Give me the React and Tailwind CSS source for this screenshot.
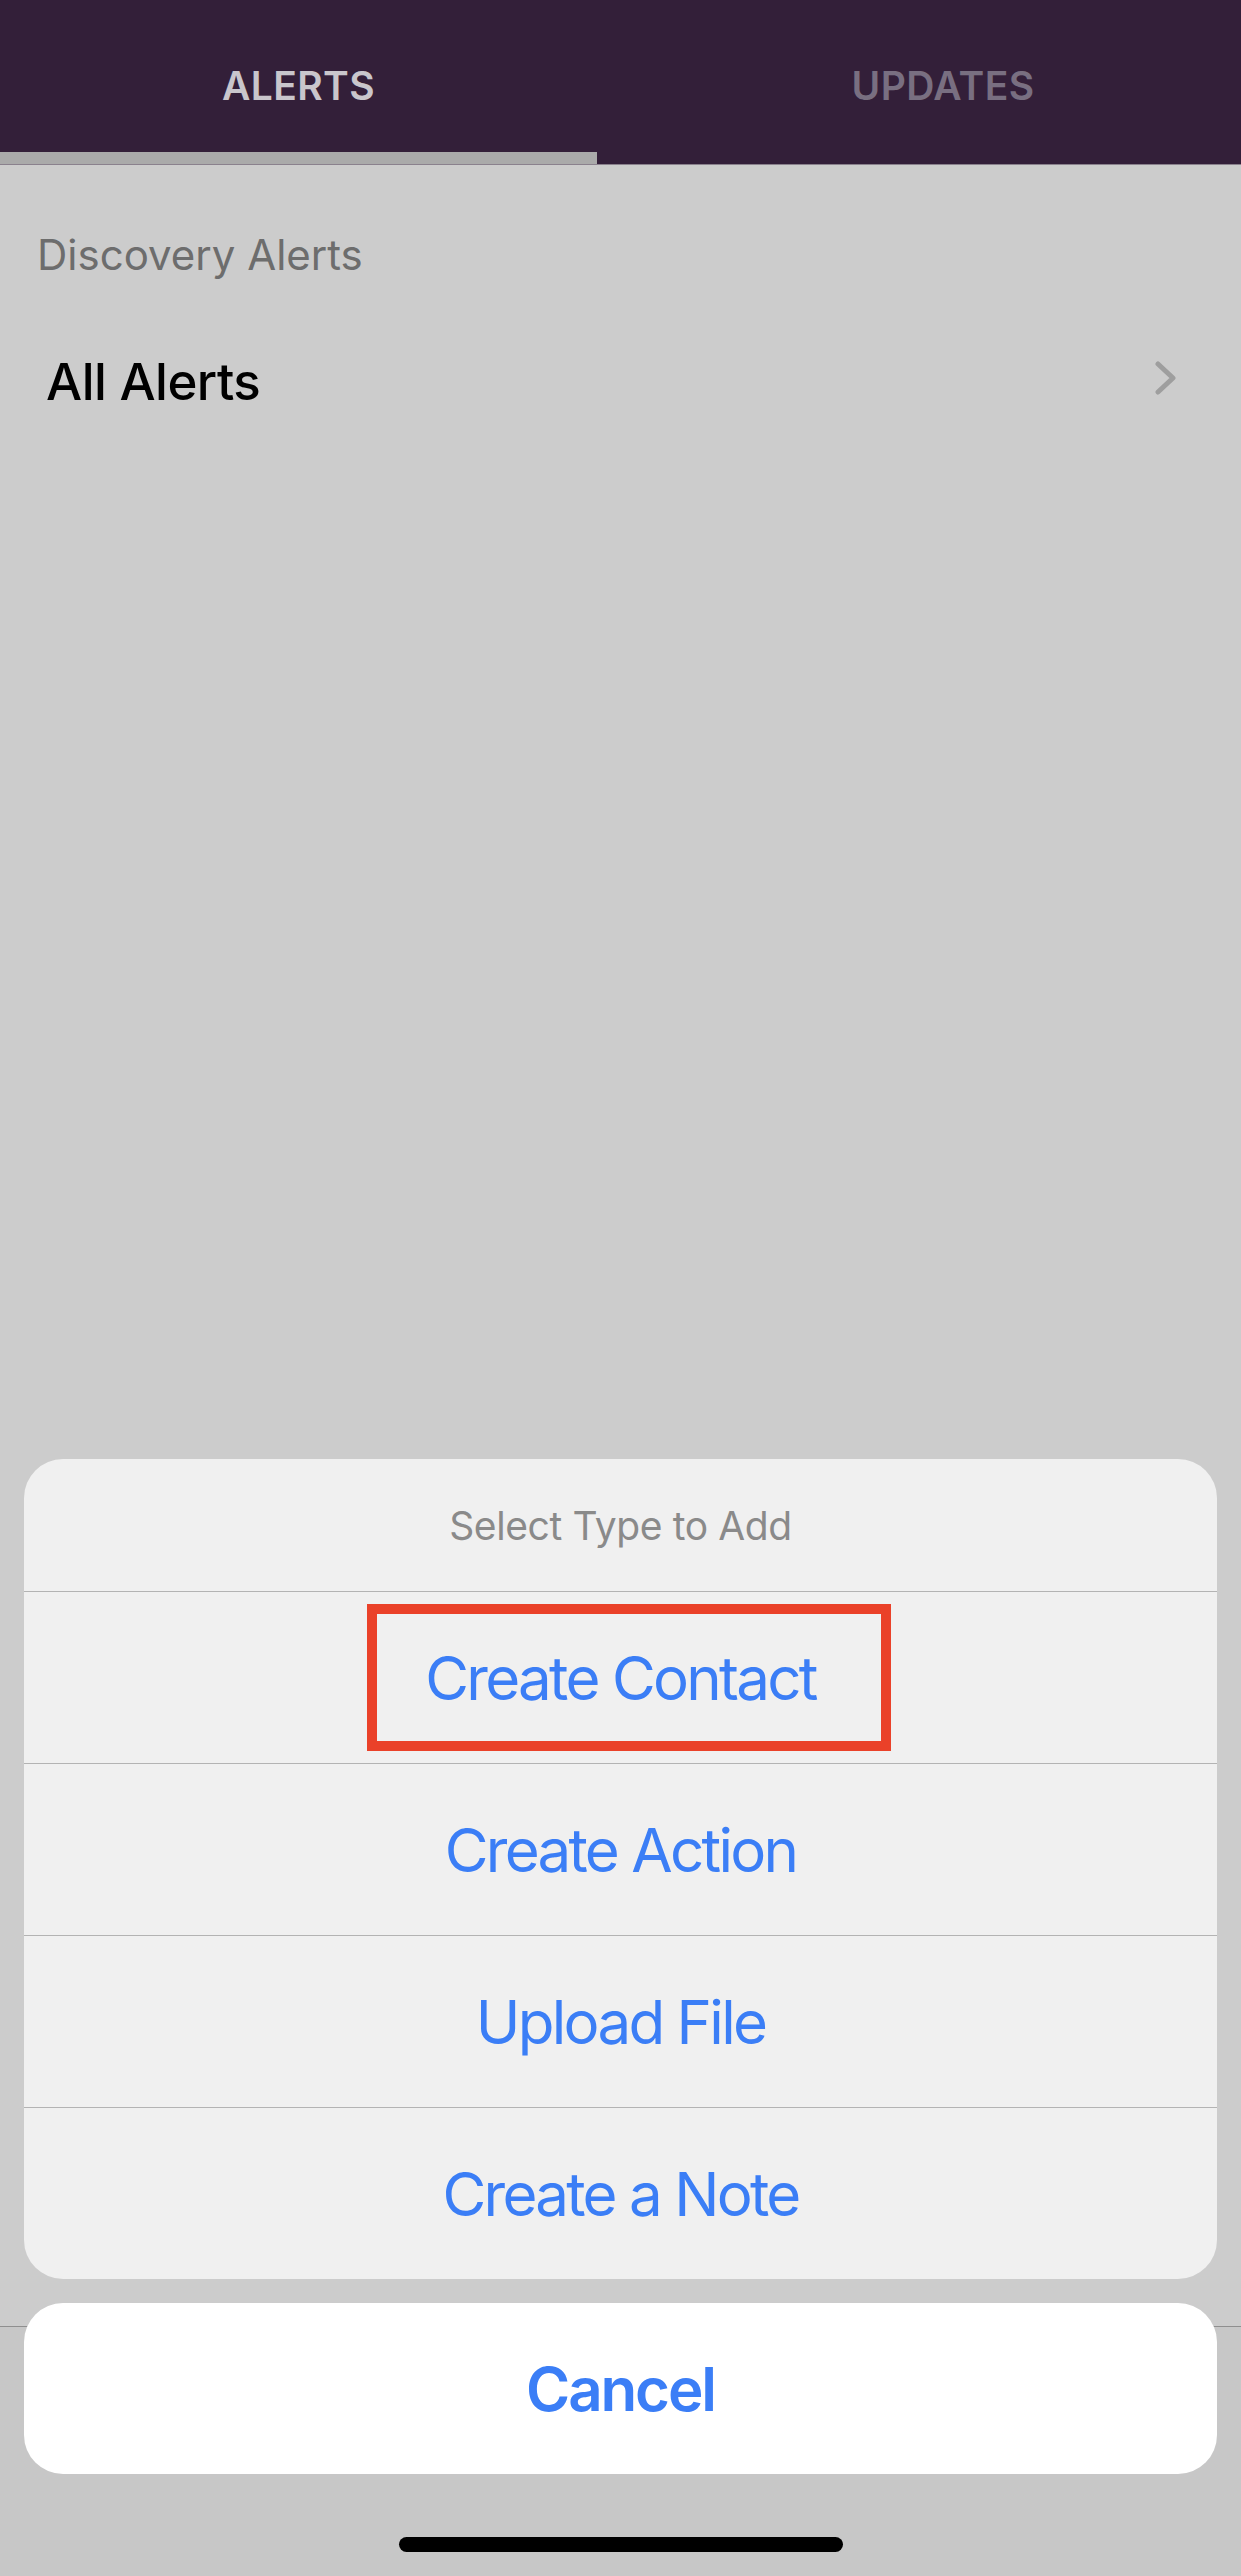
import React from "react";

const font = { fontFamily: "Inter, 'Noto Sans', 'Liberation Sans', sans-serif" };

function Row({ label, children }) {
  return (
    <div className="relative h-[172px] border-t border-[#b3b3b3] flex items-center justify-center">
      <span className="text-[60px] leading-none text-[#3b7ef6] tracking-[-0.045em]">{label}</span>
      {children}
    </div>
  );
}

export default function App() {
  return (
    <div style={font} className="relative h-[2576px] w-full flex flex-col bg-[#cccccc] overflow-hidden">
      {/* Header tabs */}
      <div className="h-[165px] flex bg-[#331f39] border-b border-[#8a818d]">
        <div className="w-[597px] h-full flex justify-center pt-[66px] border-b-[12px] border-[#aaaaaa]">
          <span className="text-[39px] leading-none font-semibold text-[#c9c6cc] tracking-[0.01em]">ALERTS</span>
        </div>
        <div className="flex-1 h-full flex justify-center pt-[66px] pl-[48px]">
          <span className="text-[39px] leading-none font-semibold text-[#796f81] tracking-[0.01em]">UPDATES</span>
        </div>
      </div>

      {/* List */}
      <div className="mt-[69px] pl-[37px]">
        <span className="text-[42px] leading-none text-[#6d6d6d]">Discovery Alerts</span>
      </div>
      <div className="mt-[80px] pl-[46px] pr-[65px] flex items-center justify-between h-[51px]">
        <span className="text-[51px] leading-none font-medium text-black tracking-[-0.01em]">All Alerts</span>
        <svg width="21" height="34" viewBox="0 0 21 34" className="mb-[7px]">
          <polyline points="3,3 18,17 3,31" fill="none" stroke="#9e9e9e" strokeWidth="5" strokeLinecap="round" strokeLinejoin="round" />
        </svg>
      </div>

      <div className="flex-1" />

      {/* Bottom bar under overlay */}
      <div className="h-[250px] border-t border-[#8f8f8f] bg-[#c7c7c7] flex flex-col justify-end items-center pb-[24px]">
        <div className="w-[444px] h-[15px] rounded-full bg-black" />
      </div>

      {/* Action sheet overlay */}
      <div className="absolute inset-x-0 bottom-[102px] px-[24px] flex flex-col gap-[24px]">
        <div className="rounded-[39px] bg-[#f0f0f0] overflow-hidden">
          <div className="h-[132px] flex items-center justify-center">
            <span className="text-[39px] leading-none text-[#8a8a8a] tracking-[-0.01em]">Select Type to Add</span>
          </div>
          <Row label="Create Contact">
            <div className="absolute left-[343px] top-[12px] w-[524px] h-[147px] border-[10px] border-[#ea4129]" />
          </Row>
          <Row label="Create Action" />
          <Row label="Upload File" />
          <Row label="Create a Note" />
        </div>
        <div className="h-[171px] rounded-[39px] bg-white flex items-center justify-center">
          <span className="text-[60px] leading-none font-semibold text-[#3b7ef6] tracking-[-0.035em]">Cancel</span>
        </div>
      </div>
    </div>
  );
}
